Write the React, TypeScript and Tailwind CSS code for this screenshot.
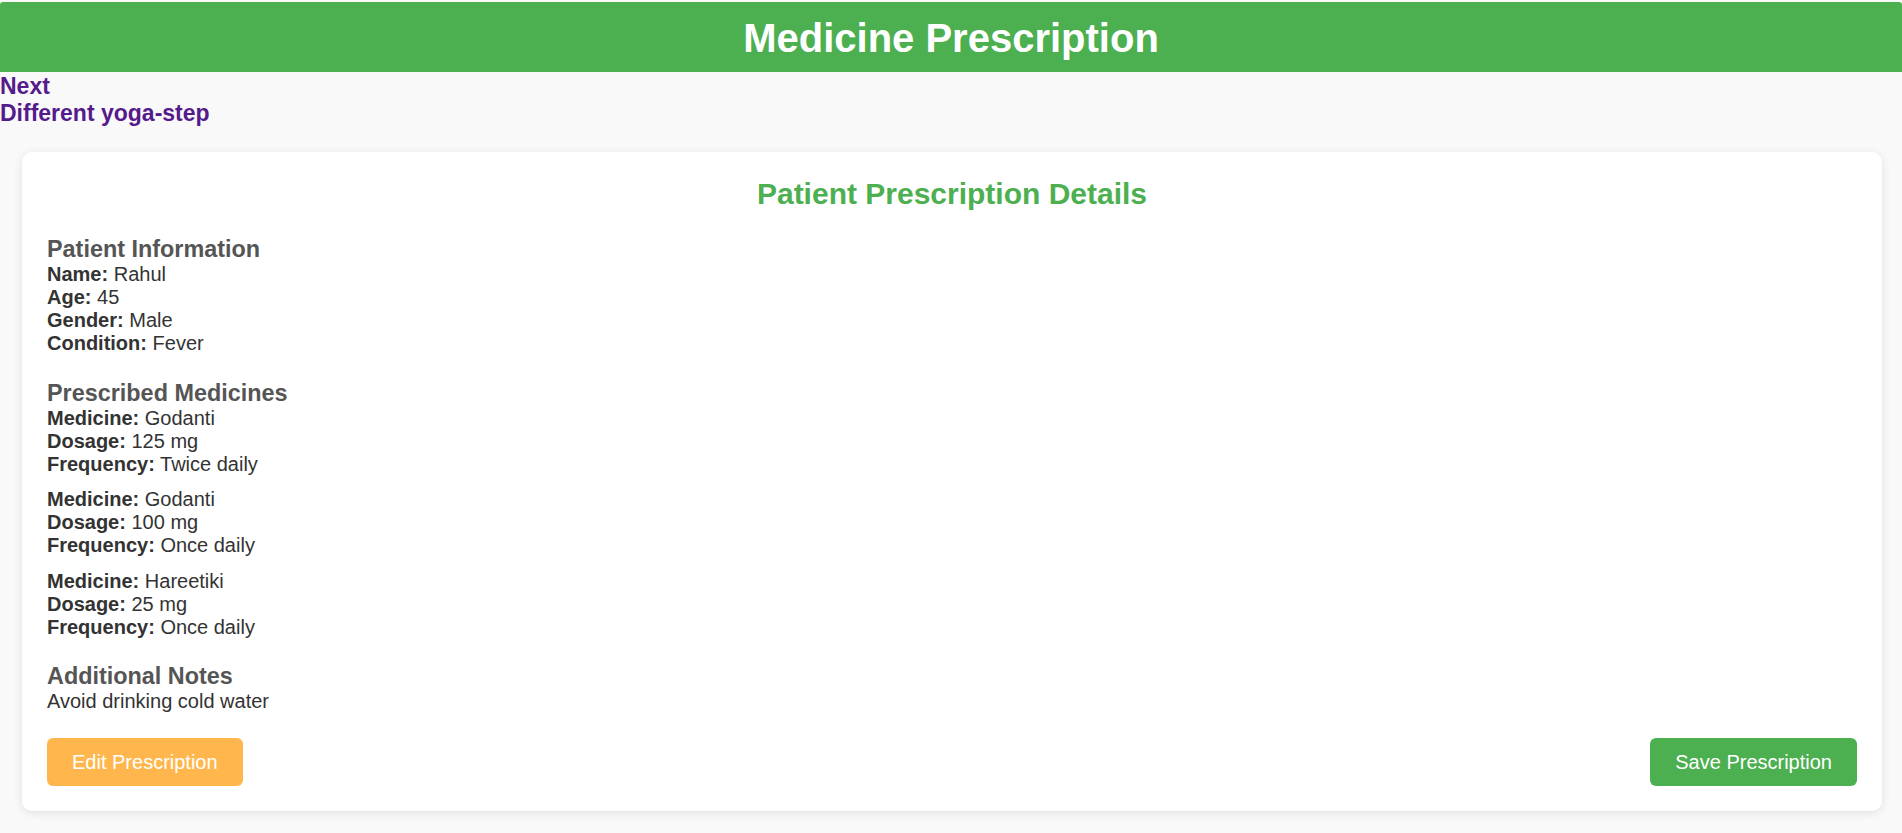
const patient = {
  name: "Rahul",
  age: 45,
  gender: "Male",
  condition: "Fever",
};

const medicines = [
  { name: "Godanti", dosage: "125 mg", frequency: "Twice daily" },
  { name: "Godanti", dosage: "100 mg", frequency: "Once daily" },
  { name: "Hareetiki", dosage: "25 mg", frequency: "Once daily" },
];

function Field({ label, value }: { label: string; value: string | number }) {
  return (
    <p className="text-[20px] leading-[23px] text-[#333]">
      <strong className="font-bold">{label}:</strong> {value}
    </p>
  );
}

function SectionTitle({ children }: { children: React.ReactNode }) {
  return <h3 className="text-[23.4px] leading-[27px] font-bold text-[#555]">{children}</h3>;
}

export default function App() {
  return (
    <div className="min-h-screen bg-[#f9f9f9] font-['Liberation_Sans',Arial,sans-serif] pt-[2px] pb-6">
      <header className="bg-[#4CAF50] rounded-t-[3px] pt-[12.5px] pb-[11.5px] text-center">
        <h1 className="text-[40px] leading-[46px] font-bold text-white">Medicine Prescription</h1>
      </header>

      <nav className="flex flex-col items-start pt-[0.5px]">
        <a href="#" className="text-[23px] leading-[27px] font-bold text-[#551A8B]">
          Next
        </a>
        <a href="#" className="text-[23px] leading-[27px] font-bold text-[#551A8B]">
          Different yoga-step
        </a>
      </nav>

      <div className="ml-[22px] mr-5 mt-[25px] bg-white rounded-[10px] shadow-[0_2px_10px_rgba(0,0,0,0.1)] p-[25px]">
        <h2 className="text-[30px] leading-[34.5px] font-bold text-[#4CAF50] text-center mb-[24.5px]">
          Patient Prescription Details
        </h2>

        {/* patient info */}
        <section className="mb-[25px]">
          <SectionTitle>Patient Information</SectionTitle>
          <Field label="Name" value={patient.name} />
          <Field label="Age" value={patient.age} />
          <Field label="Gender" value={patient.gender} />
          <Field label="Condition" value={patient.condition} />
        </section>

        <section className="mb-[24.5px]">
          <SectionTitle>Prescribed Medicines</SectionTitle>
          <div className="flex flex-col gap-[12.5px]">
            {medicines.map((m, i) => (
              <div key={i}>
                <Field label="Medicine" value={m.name} />
                <Field label="Dosage" value={m.dosage} />
                <Field label="Frequency" value={m.frequency} />
              </div>
            ))}
          </div>
        </section>

        <section className="mb-[25px]">
          <SectionTitle>Additional Notes</SectionTitle>
          <p className="text-[20px] leading-[23px] text-[#333]">Avoid drinking cold water</p>
        </section>

        <div className="flex justify-between">
          <button className="bg-[#FFB74D] text-white text-[20px] leading-[23px] px-[25px] py-[12.5px] rounded-[6px]">
            Edit Prescription
          </button>
          <button className="bg-[#4CAF50] text-white text-[20px] leading-[23px] px-[25px] py-[12.5px] rounded-[6px]">
            Save Prescription
          </button>
        </div>
      </div>
    </div>
  );
}
